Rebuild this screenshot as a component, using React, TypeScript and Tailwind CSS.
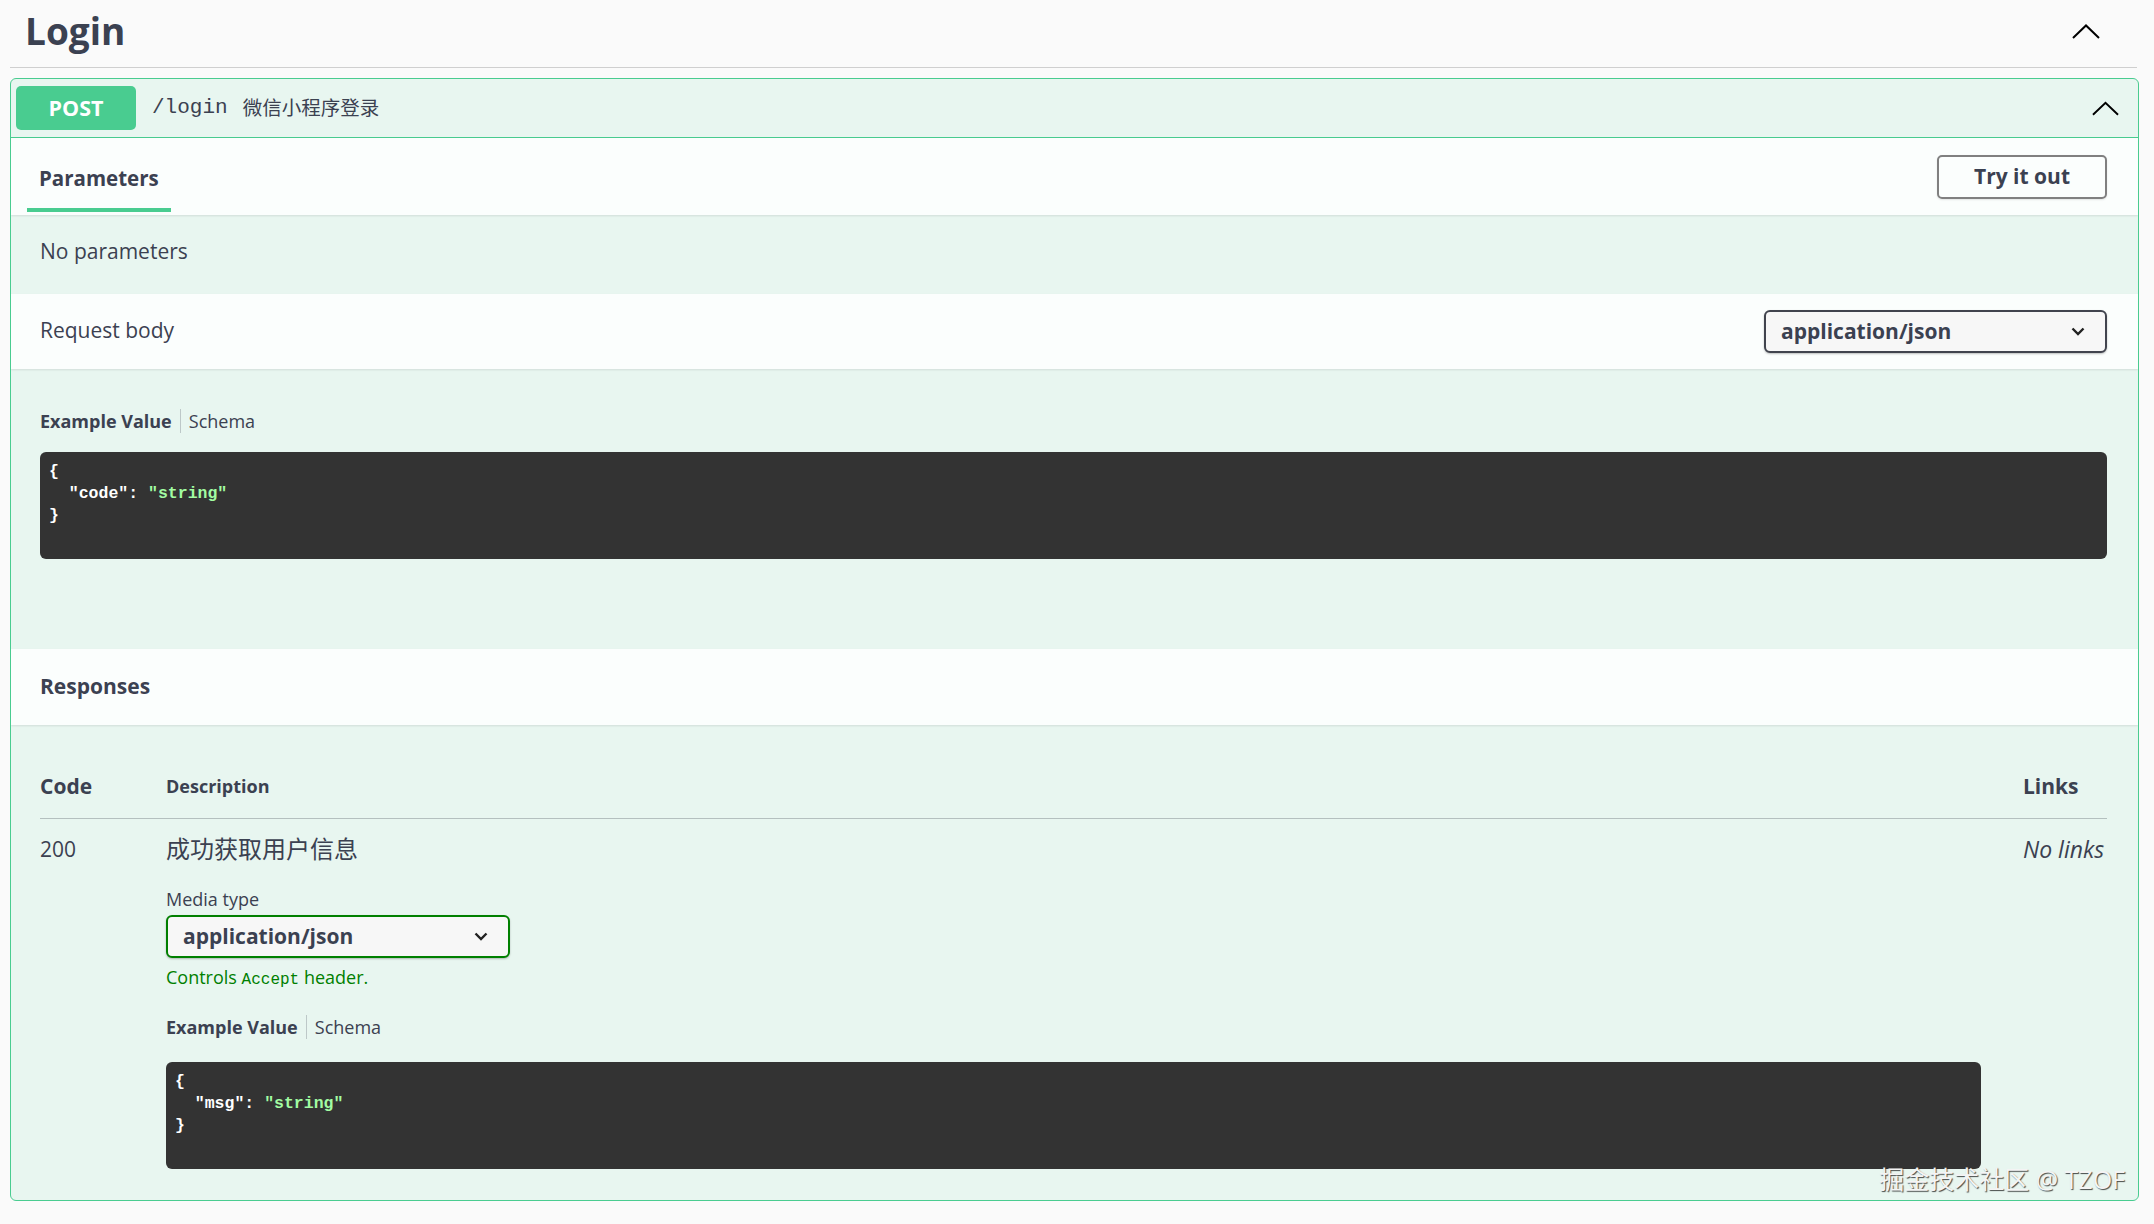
import React from "react";

const sans = "font-['Open_Sans','Noto_Sans_CJK_SC',sans-serif]";
const mono = "font-['Liberation_Mono','Noto_Sans_CJK_SC',monospace]";

const ChevronUp = ({ className }: { className?: string }) => (
  <svg viewBox="0 0 28 15" className={className} fill="none" stroke="currentColor" strokeWidth={2}>
    <polyline points="1,14 14,1.5 27,14" />
  </svg>
);

const ChevronDown = () => (
  <svg viewBox="0 0 14 9" className="w-[14px] h-[9px]" fill="none" stroke="#222" strokeWidth={2.4}>
    <polyline points="1.5,1.5 7,7 12.5,1.5" />
  </svg>
);

const Select = ({ green, width }: { green?: boolean; width: string }) => (
  <div
    className={`${width} h-[43px] flex items-center justify-between pl-[15px] pr-[20px] rounded-[6px] border-2 bg-[#f7f7f7] shadow-[0_1px_2px_0_rgba(0,0,0,0.25)] ${
      green ? "border-[#008000]" : "border-[#41444e]"
    }`}
  >
    <span className="text-[21px] font-bold text-[#3b4151]">application/json</span>
    <ChevronDown />
  </div>
);

const ExampleTabs = () => (
  <div className="flex items-center text-[18px] leading-[24px] text-[#3b4151]">
    <span className="font-bold">Example Value</span>
    <span className="mx-[8px] w-px h-[24px] bg-[rgba(59,65,81,0.25)]" />
    <span>Schema</span>
  </div>
);

const CodeBlock = ({ name, className }: { name: string; className?: string }) => (
  <pre
    className={`bg-[#333333] rounded-[6px] h-[107px] px-[9px] pt-[9px] ${mono} text-[16.5px] leading-[22px] font-bold text-white ${className ?? ""}`}
  >
    {"{\n  "}
    <span>"{name}"</span>
    {": "}
    <span className="text-[#a2fca2]">"string"</span>
    {"\n}"}
  </pre>
);

export default function App() {
  return (
    <div className={`relative h-[1224px] overflow-hidden bg-[#fafafa] pl-[10px] pr-[15px] text-[#3b4151] ${sans}`}>
      {/* title */}
      <div className="h-[68px] flex items-center justify-between border-b border-[#cfcfcf] pl-[15px] pr-[37px] pb-[5px] mr-[2px]">
        <h2 className="text-[37px] font-bold">Login</h2>
        <ChevronUp className="w-[28px] h-[15px] text-black" />
      </div>

      {/* operation card */}
      <div className="mt-[10px] border border-[#49cc90] rounded-[6px] bg-[#e8f6f0] overflow-hidden">
        <div className="h-[59px] flex items-center border-b border-[#49cc90] pl-[5px] pr-[19px]">
          <span className="w-[120px] h-[44px] flex items-center justify-center rounded-[5px] bg-[#49cc90] text-white text-[21.5px] font-bold">
            POST
          </span>
          <span className={`ml-[16px] text-[21px] ${mono}`}>/login</span>
          <span className="ml-[15px] text-[19.5px]">微信小程序登录</span>
          <ChevronUp className="ml-auto w-[27px] h-[15px] text-black" />
        </div>

        {/* tabs */}
        <div className="h-[77px] flex items-center justify-between bg-[#fbfefd] shadow-[0_1px_2px_rgba(0,0,0,0.1)] pr-[31px]">
          <div className="self-stretch ml-[16px] mb-[3px] pt-[10px] px-[12px] flex items-center border-b-4 border-[#49cc90]">
            <span className="text-[20.5px] font-bold">Parameters</span>
          </div>
          <button className="w-[170px] h-[44px] rounded-[5px] border-2 border-[#808080] text-[21px] font-bold shadow-[0_1px_2px_rgba(0,0,0,0.1)]">
            Try it out
          </button>
        </div>

        <div className="h-[79px] flex items-center pl-[29px] pb-[6px] text-[21px]">No parameters</div>

        <div className="h-[75px] flex items-center justify-between bg-[#fbfefd] shadow-[0_1px_2px_rgba(0,0,0,0.1)] pl-[29px] pr-[31px]">
          <span className="text-[21px] pb-[2px]">Request body</span>
          <Select width="w-[343px]" />
        </div>

        <div className="pt-[40px] pb-[90px] pl-[29px] pr-[31px]">
          <ExampleTabs />
          <CodeBlock name="code" className="mt-[19px]" />
        </div>

        <div className="h-[76px] flex items-center bg-[#fbfefd] shadow-[0_1px_2px_rgba(0,0,0,0.1)] pl-[29px]">
          <span className="text-[21px] font-bold">Responses</span>
        </div>

        {/* responses table */}
        <div className="pt-[46px] pb-[31px] pl-[29px] pr-[31px]">
          <div className="grid grid-cols-[126px_1fr_84px] items-center h-[30px] pb-[17px] border-b border-[rgba(59,65,81,0.3)] box-content">
            <span className="text-[21px] font-bold leading-[30px]">Code</span>
            <span className="text-[18px] font-bold leading-[30px]">Description</span>
            <span className="text-[21px] font-bold leading-[30px]">Links</span>
          </div>
          <div className="grid grid-cols-[126px_1fr_84px] pt-[15px]">
            <span className="text-[21px] leading-[30px]">200</span>
            <div className="pr-[42px]">
              <p className="text-[24px] leading-[30px]">成功获取用户信息</p>
              <p className="mt-[23px] text-[18px] leading-[24px]">Media type</p>
              <div className="mt-[4px]">
                <Select green width="w-[344px]" />
              </div>
              <p className="mt-[7px] text-[18px] leading-[24px] text-[#008000]">
                Controls <span className={`${mono} text-[16px]`}>Accept</span> header.
              </p>
              <div className="mt-[23px]">
                <ExampleTabs />
              </div>
              <CodeBlock name="msg" className="mt-[23px]" />
            </div>
            <span className="text-[23px] italic leading-[30px] whitespace-nowrap">No links</span>
          </div>
        </div>
      </div>

      <div className="absolute right-[29px] bottom-[30px] text-[25px] leading-[30px] text-[#f4f4f4] [text-shadow:1px_1px_1px_rgba(0,0,0,0.7)]">
        掘金技术社区 @ TZOF
      </div>
    </div>
  );
}
